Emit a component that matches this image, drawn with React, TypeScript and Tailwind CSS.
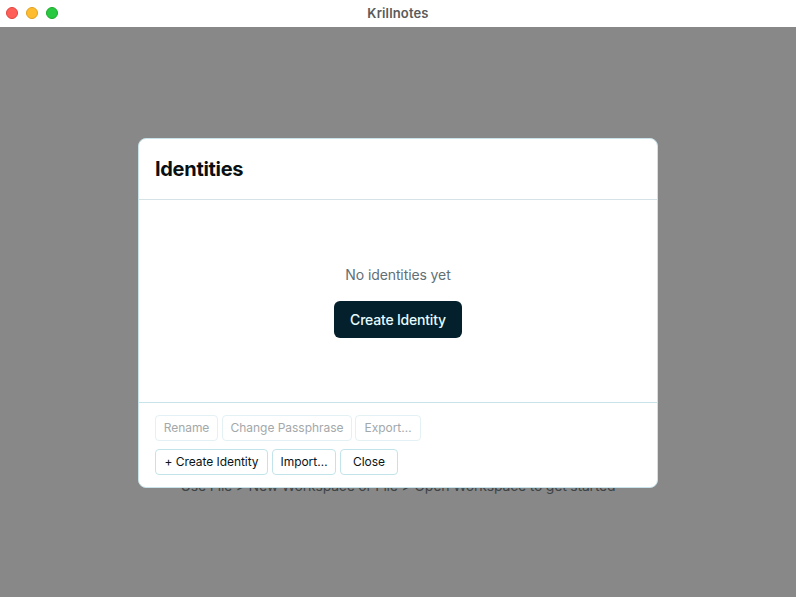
// Krillnotes identities dialog over the empty workspace
function FooterButton({ label, width, disabled }: { label: string; width: string; disabled?: boolean }) {
  return (
    <button
      type="button"
      disabled={disabled}
      className={`${width} h-[26px] rounded-[4px] border text-[12px] leading-none tracking-[-0.04px] ${
        disabled ? 'border-[#e3f1f4] text-[#a3a8aa]' : 'border-[#c3e3ea] text-[#0a1418]'
      }`}
    >
      {label}
    </button>
  )
}

export default function App() {
  return (
    <div className="relative w-[796px] h-[597px] overflow-hidden bg-[#888888] font-['Inter',sans-serif]">
      {/* Title bar */}
      <div className="relative flex h-[27px] items-center justify-center bg-white">
        <div className="absolute left-[6px] top-[7px] flex gap-[8px]">
          <span className="h-3 w-3 rounded-full border border-[#e0443e] bg-[#ff5f57]" />
          <span className="h-3 w-3 rounded-full border border-[#dea123] bg-[#febc2e]" />
          <span className="h-3 w-3 rounded-full border border-[#1aab29] bg-[#28c840]" />
        </div>
        <span className="text-[13px] font-semibold tracking-[0.15px] text-[#5a5a5a]">Krillnotes</span>
      </div>

      {/* Empty workspace, mostly hidden behind the dialog */}
      <div className="flex h-[570px] items-start justify-center pt-[448px]">
        <p className="text-[14px] tracking-[-0.2px] text-[#3e4446]">Use File &gt; New Workspace or File &gt; Open Workspace to get started</p>
      </div>

      {/* Dialog */}
      <div className="absolute left-[138px] top-[138px] flex h-[350px] w-[520px] flex-col rounded-[8px] border border-[#c8e3e9] bg-white">
        <div className="flex h-[61px] items-center border-b border-[#d5e3e6] px-4">
          <h2 className="text-[20px] font-bold tracking-[-0.3px] text-[#0a0f12]">Identities</h2>
        </div>
        <div className="flex h-[202px] flex-col items-center pt-[65px]">
          <p className="text-[14px] leading-[20px] tracking-[-0.1px] text-[#5f7076]">No identities yet</p>
          <button
            type="button"
            className="mt-4 h-[37px] w-[128px] rounded-[6px] bg-[#03202c] text-[14px] font-medium tracking-[-0.2px] text-[#e6fbff]"
          >
            Create Identity
          </button>
        </div>
        <div className="flex flex-1 flex-col gap-2 border-t border-[#c8e3e9] px-4 pt-3">
          <div className="flex gap-1">
            <FooterButton label="Rename" width="w-[63px]" disabled />
            <FooterButton label="Change Passphrase" width="w-[130px]" disabled />
            <FooterButton label="Export…" width="w-[66px] ml-[-1px]" disabled />
          </div>
          <div className="flex gap-1">
            <FooterButton label="+ Create Identity" width="w-[113px]" />
            <FooterButton label="Import…" width="w-[64px]" />
            <FooterButton label="Close" width="w-[58px]" />
          </div>
        </div>
      </div>
    </div>
  )
}
